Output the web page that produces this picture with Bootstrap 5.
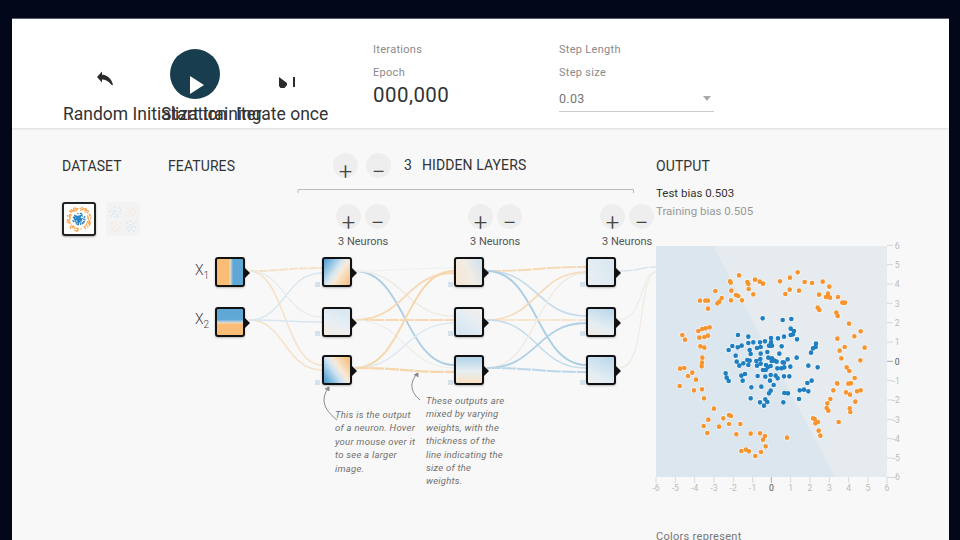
<!DOCTYPE html>
<html lang="en">
<head>
<meta charset="utf-8">
<title>Playground</title>
<link href="https://cdn.jsdelivr.net/npm/bootstrap@5.3.0/dist/css/bootstrap.min.css" rel="stylesheet">
<style>
html,body{height:540px;overflow:hidden}
body{background:#03071a;padding:18px 11px 0 12px;font-family:Roboto,"Liberation Sans",sans-serif;color:#333}
.shell{height:522px;background:#f8f8f8;overflow:hidden;border-top:1px solid #5a5e6c}
.topbar{height:109px;background:#fff;box-shadow:0 1px 2px rgba(0,0,0,.12);padding-left:51px;position:relative}
.ctl{display:flex;flex-direction:column;align-items:flex-start}
.ctl-a{width:98px;padding-top:51px}
.ctl-b{width:75px;padding-top:30px}
.ctl-c{width:137px;padding-top:58px}
.ctl-label{font-size:17.5px;line-height:21px;white-space:nowrap;color:#333}
.icon-a{display:block;margin-left:33px;margin-bottom:18px}
.icon-c{display:block;margin-left:43px;margin-bottom:16px}
.playbtn{width:50px;height:50px;border-radius:50%;background:#183d4e;margin-left:9px;margin-bottom:5px;display:flex;align-items:center;justify-content:center}
.playglyph{transform:translate(2px,11px)}
.stat{width:186px;padding-top:24px}
.muted-label{font-size:11px;line-height:14px;color:#8a8a8a;letter-spacing:.3px}
.gap-lab{margin-bottom:9px}
.bigval{font-size:20.5px;line-height:28px;color:#333;letter-spacing:.45px;margin-top:1px}
.fakeselect{width:155px;height:27px;border-bottom:1px solid #ccc;font-size:12.5px;letter-spacing:.3px;color:#757575;position:relative;padding-top:5px;margin-top:5px}
.fakeselect::after{content:"";position:absolute;right:3px;top:11px;border:4px solid transparent;border-top:5px solid #aaa}
.stage{position:relative;height:411px;margin-top:1px}
.stage>*{position:absolute}
.wires{left:0;top:0}
.head{font-size:14px;line-height:16px;color:#333;white-space:nowrap;letter-spacing:.1px}
.circ{width:25px;height:25px;border-radius:50%;background:#eee;color:#444;font-size:24px;line-height:25px;text-align:center}
.circ span{display:block;transform:translateY(7px);font-weight:300}
.neur{font-size:11px;line-height:13px;color:#555;white-space:nowrap;top:106px}
.ds{width:34px;height:34px;border-radius:3px;overflow:hidden;top:73px}
.ds-on{border:2px solid #222;background:#fff;box-shadow:0 1px 2px rgba(0,0,0,.3);left:50px}
.ds-off{background:#f3f3f3;left:94px}
.nd{width:30px;height:30px;border:2px solid #111;border-radius:3px;box-shadow:0 1px 2px rgba(0,0,0,.25)}
.nd::after{content:"";position:absolute;left:28px;top:9px;border:5px solid transparent;border-left:5px solid #111;border-right:0}
.f1{background:linear-gradient(90deg,#f9bd75 0 45%,#f0d8b8 50%,#a9c9e0 55%,#5fa8d6 62% 100%)}
.f2{background:linear-gradient(180deg,#5fa8d6 0 40%,#a9c9e0 48%,#f0d8b8 53%,#f9bd75 60% 100%)}
.n11{background:linear-gradient(125deg,#59a4d6 5%,#d8e8f2 45%,#f6ead9 58%,#f8c184 95%)}
.n12{background:linear-gradient(200deg,#d6e6f1,#e8eff4 55%,#f5ebe0)}
.n13{background:linear-gradient(55deg,#59a4d6 8%,#cfe3f1 42%,#f6ead9 58%,#f8c184 92%)}
.n21{background:linear-gradient(65deg,#f5e4cf,#f1ece5 50%,#cfe1ee)}
.n22{background:linear-gradient(215deg,#f3efe8,#e4edf3 45%,#d2e3f0)}
.n23{background:linear-gradient(180deg,#b2d3e9,#e6eef3 55%,#f8e1c3)}
.n31{background:linear-gradient(65deg,#e9eff3,#d9e7f1)}
.n32{background:linear-gradient(200deg,#b9d6ea,#e6eef3 65%,#f2e9df)}
.n33{background:linear-gradient(205deg,#b9d6ea,#e3edf3 70%,#eef0f0)}
.bias{width:5px;height:5px;background:#d5e2ec}
.xl{font-size:14px;line-height:16px;color:#444;font-weight:300;left:183px}
.xl sub{font-size:10px;bottom:-.4em}
.cal{font-size:9.5px;line-height:13.4px;font-style:italic;color:#707070;letter-spacing:.25px}
.test{font-size:11.5px;line-height:14px;color:#333;left:644px;top:57px}
.train{font-size:11.5px;line-height:14px;color:#999;left:644px;top:75px}
.hl-title{left:392px;top:28px;column-gap:10px}
.colors-note{left:644px;top:401px;color:#777}
.plot{left:628px;top:101px}
.a-ds{left:50px;top:29px}.a-fe{left:156px;top:29px}.a-ou{left:644px;top:29px}
.c-r0{top:24px}.c-r1{top:75px}
.c-a{left:321px}.c-b{left:354px}.c-c{left:324px}.c-d{left:353px}.c-e{left:456px}.c-f{left:485px}.c-g{left:588px}.c-h{left:617px}
.lbl-1{left:326px}.lbl-2{left:458px}.lbl-3{left:590px}
.col-f{left:203px}.col-1{left:310px}.col-2{left:442px}.col-3{left:574px}
.row-1{top:128px}.row-2{top:177.500px}.row-3{top:226px}
.b-1{left:303px}.b-2{left:436px}.b-3{left:568px}
.br-1{top:153px}.br-2{top:202px}.br-3{top:251px}
.x-1{top:133px}.x-2{top:182px}
.cal-1{left:323px;top:279px;width:86px}
.cal-2{left:414px;top:265px;width:84px}
</style>
</head>
<body>
<main class="shell">
  <header class="topbar d-flex">
    <div class="ctl ctl-a">
      <svg class="icon-a" width="18" height="16" viewBox="0 0 18 16" fill="#2b2b2b"><path d="M1 7L6 1.500V12.500ZM5 4.500C11 5 15.500 8 17 15H15.500C13 11.500 10 9.500 5 9.500Z"/></svg>
      <div class="ctl-label">Random Initialization</div>
    </div>
    <div class="ctl ctl-b">
      <div class="playbtn"><svg class="playglyph" width="16" height="20" viewBox="0 0 16 20" fill="#fff"><path d="M1 1l14 9-14 9z"/></svg></div>
      <div class="ctl-label">Start training</div>
    </div>
    <div class="ctl ctl-c">
      <svg class="icon-c" width="16" height="11" viewBox="0 0 16 11" fill="#2b2b2b"><path d="M0 0L8 6V8L5.500 11H1.500L0 9ZM14 0h2v10h-2z"/></svg>
      <div class="ctl-label">Iterate once</div>
    </div>
    <div class="stat">
      <div class="muted-label gap-lab">Iterations</div>
      <div class="muted-label">Epoch</div>
      <div class="bigval">000,000</div>
    </div>
    <div class="stat">
      <div class="muted-label gap-lab">Step Length</div>
      <div class="muted-label">Step size</div>
      <div class="fakeselect">0.03</div>
    </div>
  </header>
  <section class="stage">
    <svg class="wires" width="937" height="411" viewBox="12 129 937 411" fill="none">
      <path d="M298 193V189.500H633.500V193" stroke="#bbb"/>
      <g opacity=".6">
        <g stroke="#f5d3a8" stroke-width="1.500">
          <path d="M249 271C285 271 285 268 322 268" stroke-width="2" stroke-dasharray="9 1"/>
          <path d="M249 271C285 271 285 365 322 365"/>
          <path d="M249 320C285 320 285 370 322 370"/>
        </g>
        <g stroke="#c2dbec" stroke-width="1.300">
          <path d="M249 320C285 320 285 273 322 273"/>
          <path d="M249 320C285 320 285 322 322 322"/>
        </g>
        <path d="M249 271C285 271 285 317 322 317" stroke="#dfe3e3" stroke-width="1.200"/>
      </g>
      <g opacity=".72">
        <path d="M355 271C405 271 405 365 454 365" stroke="#8fbfdf" stroke-width="1.800"/>
        <path d="M355 271C405 271 405 316 454 316" stroke="#ece6dc" stroke-width="1.400"/>
        <path d="M355 271C405 271 405 268 454 268" stroke="#eaeeee" stroke-width="1.200"/>
        <path d="M355 320C405 320 405 273 454 273" stroke="#f6cd9b" stroke-width="1.800"/>
        <path d="M355 320C405 320 405 320 454 320" stroke="#f6cd9b" stroke-width="1.800" stroke-dasharray="14 1"/>
        <path d="M355 320C405 320 405 368 454 368" stroke="#e9e9e6" stroke-width="1.200"/>
        <path d="M355 368C405 368 405 271 454 271" stroke="#f6c990" stroke-width="1.900"/>
        <path d="M355 368C405 368 405 323 454 323" stroke="#d5e4ee" stroke-width="1.400"/>
        <path d="M355 368C405 368 405 372 454 372" stroke="#f6c990" stroke-width="2.300" stroke-dasharray="14 1"/>

        <path d="M487 271C537 271 537 267 586 267" stroke="#f6cd9b" stroke-width="1.900" stroke-dasharray="14 1"/>
        <path d="M487 271C537 271 537 316 586 316" stroke="#afd0e6" stroke-width="1.600"/>
        <path d="M487 271C537 271 537 365 586 365" stroke="#8fbfdf" stroke-width="2"/>
        <path d="M487 320C537 320 537 272 586 272" stroke="#f6cd9b" stroke-width="1.600"/>
        <path d="M487 320C537 320 537 320 586 320" stroke="#f6d3a8" stroke-width="1.600" stroke-dasharray="14 1"/>
        <path d="M487 320C537 320 537 368 586 368" stroke="#afd0e6" stroke-width="1.400"/>
        <path d="M487 368C537 368 537 273 586 273" stroke="#ece5da" stroke-width="1.300"/>
        <path d="M487 368C537 368 537 323 586 323" stroke="#95c1df" stroke-width="1.800"/>
        <path d="M487 368C537 368 537 372 586 372" stroke="#a3cae3" stroke-width="2" stroke-dasharray="14 1"/>

        <path d="M619 271C640 271 640 267 657 267" stroke="#c6dcec" stroke-width="1.400" stroke-dasharray="14 1"/>
        <path d="M619 320C644 320 640 271 657 271" stroke="#ebe9e3" stroke-width="1.200"/>
        <path d="M619 368C648 368 636 272 657 272" stroke="#f0e5d8" stroke-width="1.200"/>
      </g>
      <g stroke="#888" stroke-width="1">
        <path d="M337 420C322 408 321 398 329 387"/><path d="M325 389L329 387L329 391" fill="#888"/>
        <path d="M420 400C408 390 411 380 418 373"/><path d="M414 375L418 373L418 377" fill="#888"/>
      </g>
      <defs>
        <path id="ptsO" d="M297 136h0M270 154h0M272 158h0M322 156h0M325 162h0M345 149h0M359 155h0M369 161h0M326 177h0M274 182h0M226 183h0M288 195h0M295 198h0M340 193h0M245 204h0M238 215h0M232 220h0M180 212h0M196 212h0M204 212h0M273 211h0M306 211h0M204 236h0M420 154h0M450 143h0M473 127h0M494 156h0M516 159h0M548 155h0M568 170h0M436 192h0M449 179h0M477 182h0M537 194h0M564 191h0M558 201h0M570 203h0M594 201h0M607 218h0M615 218h0M533 233h0M538 240h0M589 248h0M593 258h0M627 281h0M662 304h0M643 319h0M592 326h0M614 351h0M599 362h0M674 353h0M604 385h0M661 391h0M620 412h0M628 423h0M644 444h0M632 460h0M625 461h0M591 460h0M209 292h0M197 295h0M187 297h0M175 303h0M127 315h0M135 329h0M178 323h0M193 321h0M204 317h0M181 349h0M193 353h0M187 383h0M186 398h0M185 409h0M120 416h0M133 414h0M157 428h0M144 438h0M168 449h0M162 481h0M186 478h0M119 468h0M192 505h0M222 536h0M205 569h0M191 588h0M202 609h0M237 590h0M250 565h0M267 555h0M273 558h0M267 582h0M301 582h0M289 613h0M332 611h0M360 610h0M375 618h0M369 629h0M377 649h0M363 666h0M346 678h0M327 664h0M318 659h0M304 663h0M441 623h0M519 565h0M524 567h0M526 580h0M534 576h0M536 602h0M541 617h0M596 576h0M560 534h0M565 542h0M562 520h0M571 507h0M580 481h0M592 461h0M618 487h0M630 494h0M633 460h0M651 484h0M662 481h0M646 515h0M629 535h0M631 546h0"/>
        <path id="ptsB" d="M368 265h0M428 270h0M454 267h0M452 296h0M462 303h0M459 313h0M452 315h0M471 328h0M432 320h0M414 325h0M393 324h0M393 336h0M375 334h0M360 337h0M340 337h0M325 339h0M325 320h0M294 315h0M277 348h0M266 360h0M293 352h0M305 347h0M351 354h0M329 360h0M362 351h0M387 347h0M396 347h0M425 349h0M528 341h0M527 351h0M519 355h0M513 368h0M332 372h0M362 371h0M382 366h0M418 371h0M287 377h0M329 392h0M322 390h0M290 395h0M298 407h0M310 400h0M325 405h0M349 393h0M361 387h0M385 383h0M395 393h0M410 395h0M443 388h0M470 383h0M351 407h0M362 401h0M378 405h0M396 385h0M403 392h0M428 397h0M432 398h0M412 415h0M383 412h0M369 420h0M377 420h0M392 408h0M424 415h0M433 412h0M451 410h0M505 407h0M533 412h0M257 430h0M260 443h0M266 453h0M304 437h0M315 432h0M308 452h0M353 438h0M376 440h0M392 435h0M407 437h0M432 439h0M448 439h0M390 452h0M413 445h0M502 459h0M515 452h0M334 472h0M364 470h0M401 465h0M392 482h0M387 490h0M433 489h0M444 490h0M479 481h0M492 479h0M505 484h0M332 505h0M360 517h0M376 508h0M382 516h0M372 527h0M430 517h0M477 507h0"/>
      </defs>
    </svg>

    <div class="head a-ds">DATASET</div>
    <div class="head a-fe">FEATURES</div>
    <div class="circ c-r0 c-a"><span>+</span></div>
    <div class="circ c-r0 c-b"><span>&minus;</span></div>
    <div class="head hl-title d-flex"><span>3</span><span>HIDDEN LAYERS</span></div>
    <div class="head a-ou">OUTPUT</div>
    <div class="test">Test bias 0.503</div>
    <div class="train">Training bias 0.505</div>

    <div class="ds ds-on">
      <svg width="30" height="30" viewBox="48 48 693 693" fill="none" stroke-linecap="round">
        <use href="#ptsO" stroke="#f9a24a" stroke-width="34"/>
        <use href="#ptsB" stroke="#2a86c8" stroke-width="34"/>
      </svg>
    </div>
    <div class="ds ds-off">
      <svg width="34" height="34" viewBox="0 0 34 34" fill="none" stroke-linecap="round" stroke-width="1.300">
        <path stroke="#c4dcee" d="M6 8h0M8 5h0M10 9h0M13 6h0M7 12h0M11 13h0M14 11h0M9 15h0M5 14h0M15 8h0M12 15h0M4 10h0M8 10h0M21 21h0M24 19h0M27 22h0M29 25h0M22 25h0M25 27h0M28 29h0M20 27h0M24 23h0M30 20h0M23 29h0M26 25h0"/>
        <path stroke="#f8dfc2" d="M21 6h0M24 5h0M27 7h0M29 10h0M22 10h0M25 11h0M28 13h0M20 13h0M24 8h0M30 6h0M23 14h0M26 14h0M6 21h0M8 24h0M11 22h0M14 25h0M7 27h0M10 28h0M13 29h0M5 25h0M9 20h0M15 21h0M12 26h0M9 30h0"/>
      </svg>
    </div>

    <div class="xl x-1">X<sub>1</sub></div>
    <div class="xl x-2">X<sub>2</sub></div>
    <div class="nd f1 col-f row-1"></div>
    <div class="nd f2 col-f row-2"></div>

    <div class="circ c-r1 c-c"><span>+</span></div>
    <div class="circ c-r1 c-d"><span>&minus;</span></div>
    <div class="neur lbl-1">3 Neurons</div>
    <div class="circ c-r1 c-e"><span>+</span></div>
    <div class="circ c-r1 c-f"><span>&minus;</span></div>
    <div class="neur lbl-2">3 Neurons</div>
    <div class="circ c-r1 c-g"><span>+</span></div>
    <div class="circ c-r1 c-h"><span>&minus;</span></div>
    <div class="neur lbl-3">3 Neurons</div>

    <div class="bias b-1 br-1"></div>
    <div class="bias b-1 br-2"></div>
    <div class="bias b-1 br-3"></div>
    <div class="bias b-2 br-1"></div>
    <div class="bias b-2 br-2"></div>
    <div class="bias b-2 br-3"></div>
    <div class="bias b-3 br-1"></div>
    <div class="bias b-3 br-2"></div>
    <div class="bias b-3 br-3"></div>

    <div class="nd n11 col-1 row-1"></div>
    <div class="nd n12 col-1 row-2"></div>
    <div class="nd n13 col-1 row-3"></div>
    <div class="nd n21 col-2 row-1"></div>
    <div class="nd n22 col-2 row-2"></div>
    <div class="nd n23 col-2 row-3"></div>
    <div class="nd n31 col-3 row-1"></div>
    <div class="nd n32 col-3 row-2"></div>
    <div class="nd n33 col-3 row-3"></div>

    <div class="cal cal-1">This is the output of a neuron. Hover your mouse over it to see a larger image.</div>
    <div class="cal cal-2">These outputs are mixed by varying weights, with the thickness of the line indicating the size of the weights.</div>

    <svg class="plot" width="280" height="270" viewBox="0 0 840 810" fill="none">
      <rect x="48" y="48" width="693" height="693" fill="#e6ebef"/>
      <path d="M48 48H220L585 741H48Z" fill="#dbe6ee"/>
      <g stroke-linecap="round">
        <use href="#ptsO" stroke="#fff" stroke-opacity=".7" stroke-width="18"/>
        <use href="#ptsO" stroke="#f7942d" stroke-width="14"/>
        <use href="#ptsB" stroke="#fff" stroke-opacity=".7" stroke-width="18"/>
        <use href="#ptsB" stroke="#1f7fc1" stroke-width="14"/>
      </g>
      <g stroke="#d8d8d8" stroke-width="3">
        <path d="M741 46h18M741 104h18M741 162h18M741 220h18M741 278h18M741 336h18M741 452h18M741 510h18M741 568h18M741 626h18M741 684h18M741 742h18M48 741v18M106 741v18M164 741v18M222 741v18M280 741v18M338 741v18M452 741v18M510 741v18M568 741v18M626 741v18M684 741v18M741 741v18"/>
        <path d="M741 394h18M394 741v18" stroke="#aaa"/>
      </g>
      <g font-size="26" fill="#bbb" font-family="Roboto,sans-serif">
        <text x="764" y="56">6</text><text x="764" y="114">5</text><text x="764" y="172">4</text><text x="764" y="230">3</text><text x="764" y="288">2</text><text x="764" y="346">1</text><text x="764" y="404" fill="#555">0</text><text x="758" y="462">-1</text><text x="758" y="520">-2</text><text x="758" y="578">-3</text><text x="758" y="636">-4</text><text x="758" y="694">-5</text><text x="758" y="750">-6</text>
        <g text-anchor="middle"><text x="48" y="784">-6</text><text x="106" y="784">-5</text><text x="164" y="784">-4</text><text x="222" y="784">-3</text><text x="280" y="784">-2</text><text x="338" y="784">-1</text><text x="394" y="784" fill="#555">0</text><text x="452" y="784">1</text><text x="510" y="784">2</text><text x="568" y="784">3</text><text x="626" y="784">4</text><text x="684" y="784">5</text><text x="741" y="784">6</text></g>
      </g>
    </svg>
    <div class="muted-label colors-note">Colors represent</div>
  </section>
</main>
<script src="https://cdn.jsdelivr.net/npm/bootstrap@5.3.0/dist/js/bootstrap.bundle.min.js"></script>
</body>
</html>
